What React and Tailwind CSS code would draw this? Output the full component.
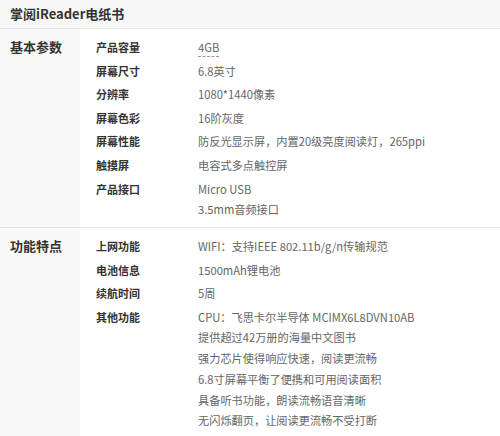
import React from "react";

const font = { fontFamily: '"Noto Sans CJK SC", "Noto Sans", sans-serif' };

const sections = [
  {
    title: "基本参数",
    rows: [
      { k: "产品容量", v: ["4GB"], dashed: true },
      { k: "屏幕尺寸", v: ["6.8英寸"] },
      { k: "分辨率", v: ["1080*1440像素"] },
      { k: "屏幕色彩", v: ["16阶灰度"] },
      { k: "屏幕性能", v: ["防反光显示屏，内置20级亮度阅读灯，265ppi"] },
      { k: "触摸屏", v: ["电容式多点触控屏"] },
      { k: "产品接口", v: ["Micro USB", "3.5mm音频接口"] },
    ],
  },
  {
    title: "功能特点",
    rows: [
      { k: "上网功能", v: ["WIFI：支持IEEE 802.11b/g/n传输规范"] },
      { k: "电池信息", v: ["1500mAh锂电池"] },
      { k: "续航时间", v: ["5周"] },
      {
        k: "其他功能",
        v: [
          "CPU：飞思卡尔半导体 MCIMX6L8DVN10AB",
          "提供超过42万册的海量中文图书",
          "强力芯片使得响应快速，阅读更流畅",
          "6.8寸屏幕平衡了便携和可用阅读面积",
          "具备听书功能，朗读流畅语音清晰",
          "无闪烁翻页，让阅读更流畅不受打断",
        ],
      },
    ],
  },
];

export default function App() {
  return (
    <div className="w-[500px] h-[436px] overflow-hidden bg-white" style={font}>
      <div className="h-[29px] bg-[#f7f7f7] border-b border-[#e4e4e4] pl-[10px] flex items-center">
        <span className="text-[13px] font-bold text-[#333]">掌阅iReader电纸书</span>
      </div>
      {sections.map((s, si) => (
        <div
          key={si}
          className={`flex ${si === 0 ? "border-b border-[#e4e4e4]" : ""}`}
        >
          <div className="w-[80px] shrink-0 bg-[#f9f9f9] pl-[10px] pt-[7px]">
            <div className="text-[13px] leading-[21px] font-bold text-[#333]">{s.title}</div>
          </div>
          <div className="flex-1 pl-[16px] pt-[8px] pb-[7px] flex flex-col gap-[2.6px]">
            {s.rows.map((r, ri) => (
              <div key={ri} className="flex">
                <div className="w-[102px] shrink-0 text-[11px] leading-[21px] font-bold text-[#333]">
                  {r.k}
                </div>
                <div className="flex flex-col">
                  {r.v.map((line, li) => (
                    <div key={li} className="text-[11.2px] leading-[20.7px] text-[#666]">
                      {r.dashed ? (
                        <span className="border-b border-dashed border-[#999] pb-[1px]">{line}</span>
                      ) : (
                        line
                      )}
                    </div>
                  ))}
                </div>
              </div>
            ))}
          </div>
        </div>
      ))}
    </div>
  );
}
